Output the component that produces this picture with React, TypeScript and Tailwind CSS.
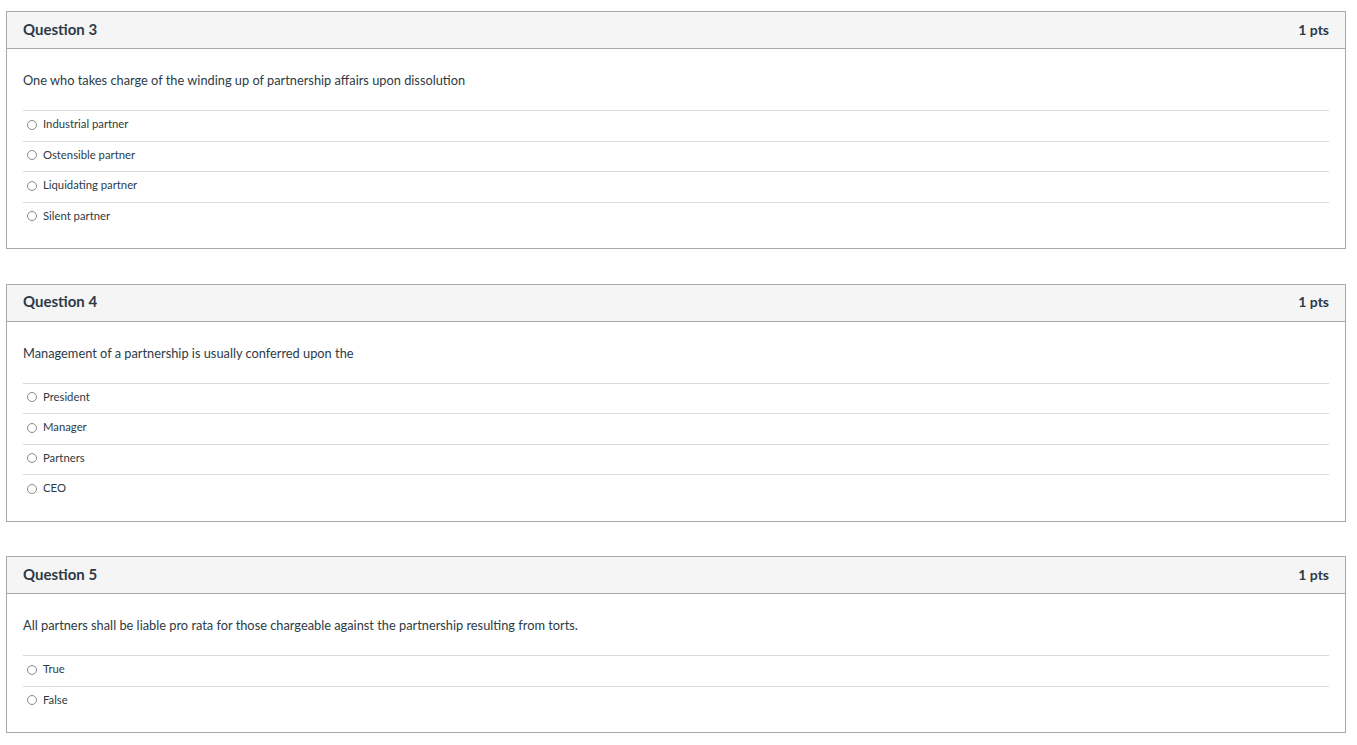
const questions = [
  {
    n: 3,
    text: 'One who takes charge of the winding up of partnership affairs upon dissolution',
    answers: ['Industrial partner', 'Ostensible partner', 'Liquidating partner', 'Silent partner'],
  },
  {
    n: 4,
    text: 'Management of a partnership is usually conferred upon the',
    answers: ['President', 'Manager', 'Partners', 'CEO'],
  },
  {
    n: 5,
    text: 'All partners shall be liable pro rata for those chargeable against the partnership resulting from torts.',
    answers: ['True', 'False'],
  },
]

function Radio() {
  return <span className="inline-block w-[10px] h-[10px] rounded-full border border-[#8a8a8a] bg-white shrink-0" />
}

function QuestionCard({ n, text, answers }: { n: number; text: string; answers: string[] }) {
  return (
    <div className="border border-[#a8a8a8] bg-white">
      {/* header */}
      <div className="h-[37px] flex items-center justify-between px-4 pb-[2px] bg-[#f5f5f5] border-b border-[#a8a8a8]">
        <span className="text-[15px] font-bold text-[#2d3b45]">Question {n}</span>
        <span className="text-[14px] font-bold text-[#2d3b45]">1 pts</span>
      </div>
      <div className="px-4 pb-4">
        <div className="pt-[21px] pb-[20px] text-[12.8px] leading-[20px] text-[#2d3b45]">{text}</div>
        {answers.map((a) => (
          <div key={a} className="h-[30.5px] flex items-center gap-[6px] pl-1 pb-[2px] border-t border-[#dadada] text-[11.3px] text-[#2d3b45]">
            <Radio />
            <span>{a}</span>
          </div>
        ))}
      </div>
    </div>
  )
}

export default function App() {
  return (
    <div className="min-h-screen bg-white pt-[11px] pl-[6px] pr-[11px] flex flex-col gap-[34.5px]" style={{ fontFamily: 'Lato, "Open Sans", sans-serif' }}>
      {questions.map((q) => (
        <QuestionCard key={q.n} {...q} />
      ))}
    </div>
  )
}
